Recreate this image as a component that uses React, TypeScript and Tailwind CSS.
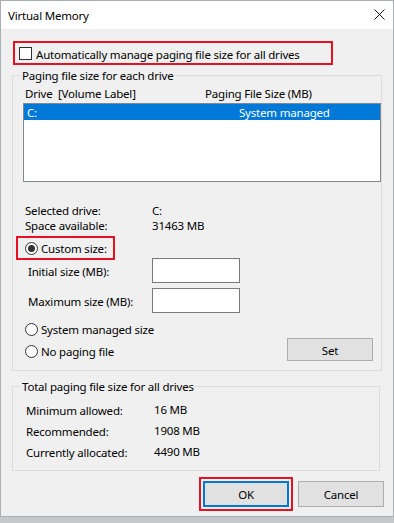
import React from "react";

function Radio({ checked, label }: { checked?: boolean; label: string }) {
  return (
    <div className="flex items-center h-[16px]">
      <span className="flex items-center justify-center w-[13px] h-[13px] rounded-full border border-[#333333] bg-white">
        {checked && <span className="w-[7px] h-[7px] rounded-full bg-[#333333]" />}
      </span>
      <span className="ml-[3px] pt-[2px]">{label}</span>
    </div>
  );
}

function Row({ label, value, labelW, h }: { label: string; value: string; labelW: string; h: string }) {
  return (
    <div className={`flex items-center ${h}`}>
      <span className={labelW}>{label}</span>
      <span>{value}</span>
    </div>
  );
}

export default function App() {
  return (
    <div
      className="w-[394px] h-[523px] bg-[#c4c8ca] text-[11.5px] tracking-[-0.2px] text-black leading-[16px]"
      style={{ fontFamily: '"Noto Sans", "Open Sans", sans-serif' }}
    >
      <div className="w-[394px] h-[517px] border border-[#a9b0b5] flex flex-col bg-[#f0f0f0]">
        {/* title bar */}
        <div className="h-[28px] bg-white flex items-center justify-between pl-[7px] pr-[8px]">
          <span className="pt-[2px]">Virtual Memory</span>
          <svg width="11" height="11" viewBox="0 0 11 11" className="mt-[-2px]">
            <path d="M0.5 0.5 L10.5 10.5 M10.5 0.5 L0.5 10.5" stroke="#111" strokeWidth="1" />
          </svg>
        </div>

        <div className="flex flex-col px-[11px]">
          {/* auto manage */}
          <div className="mt-[12px] ml-[1px] w-[320px] h-[24px] border-2 border-[#e81123] flex items-center pl-[4px]">
            <span className="w-[13px] h-[13px] border border-[#333333] bg-white" />
            <span className="ml-[4px] pt-[3px]">Automatically manage paging file size for all drives</span>
          </div>

          {/* paging file size for each drive */}
          <fieldset className="mt-[2px] border border-[#dcdcdc] w-[368px] pb-[9px]">
            <legend className="ml-[8px] px-[1px] h-[16px] pt-[1px]">Paging file size for each drive</legend>
            <div className="flex mt-[1px] ml-[12px] h-[16px] pt-[2px]">
              <span className="w-[180px]">Drive&nbsp;&nbsp;[Volume Label]</span>
              <span>Paging File Size (MB)</span>
            </div>
            <div className="mt-[3px] ml-[10px] w-[358px] h-[79px] border border-[#828790] bg-white">
              <div className="h-[16px] bg-[#0078d7] text-white flex items-center pl-[3px]">
                <span className="w-[212px] pt-[2px]">C:</span>
                <span className="pt-[2px]">System managed</span>
              </div>
            </div>

            <div className="flex flex-col ml-[12px] mt-[21px] leading-[15px]">
              <Row label="Selected drive:" value="C:" labelW="w-[127px]" h="h-[15px]" />
              <Row label="Space available:" value="31463 MB" labelW="w-[127px]" h="h-[15px]" />
            </div>

            <div className="mt-[3px] ml-[3px] w-[99px] h-[24px] border-2 border-[#e81123] flex items-center pl-[7px]">
              <Radio checked label="Custom size:" />
            </div>

            <div className="flex items-center mt-[-2px] ml-[15px] h-[25px]">
              <span className="w-[124px] pt-[3px]">Initial size (MB):</span>
              <span className="w-[88px] h-[25px] bg-white border border-[#7a7a7a]" />
            </div>
            <div className="flex items-center mt-[5px] ml-[15px] h-[25px]">
              <span className="w-[124px] pt-[3px]">Maximum size (MB):</span>
              <span className="w-[88px] h-[25px] bg-white border border-[#7a7a7a]" />
            </div>

            <div className="mt-[8px] ml-[12px]">
              <Radio label="System managed size" />
            </div>
            <div className="flex items-start justify-between mt-[1px] ml-[12px] mr-[8px] h-[23px]">
              <div className="mt-[5px]">
                <Radio label="No paging file" />
              </div>
              <button className="w-[86px] h-[23px] bg-[#e1e1e1] border border-[#adadad] leading-[16px] pt-[2px]">Set</button>
            </div>
          </fieldset>

          {/* totals */}
          <fieldset className="mt-[7px] border border-[#dcdcdc] w-[368px] pb-[8px]">
            <legend className="ml-[8px] px-[1px] h-[16px] pt-[1px]">Total paging file size for all drives</legend>
            <div className="flex flex-col ml-[13px] mt-[5px]">
              <Row label="Minimum allowed:" value="16 MB" labelW="w-[128px] pt-[2px]" h="h-[21px]" />
              <Row label="Recommended:" value="1908 MB" labelW="w-[128px] pt-[2px]" h="h-[21px]" />
              <Row label="Currently allocated:" value="4490 MB" labelW="w-[128px] pt-[2px]" h="h-[21px]" />
            </div>
          </fieldset>

          {/* buttons */}
          <div className="flex justify-end items-center mt-[6px] mr-[-2px]">
            <div className="w-[94px] h-[34px] border-2 border-[#e81123] flex items-center justify-center">
              <button className="w-[86px] h-[26px] bg-[#e1e1e1] border-2 border-[#0078d7] leading-[16px] pt-[2px]">OK</button>
            </div>
            <button className="ml-[5px] w-[86px] h-[26px] bg-[#e1e1e1] border border-[#adadad] leading-[16px] pt-[2px]">Cancel</button>
          </div>
        </div>
      </div>
    </div>
  );
}
